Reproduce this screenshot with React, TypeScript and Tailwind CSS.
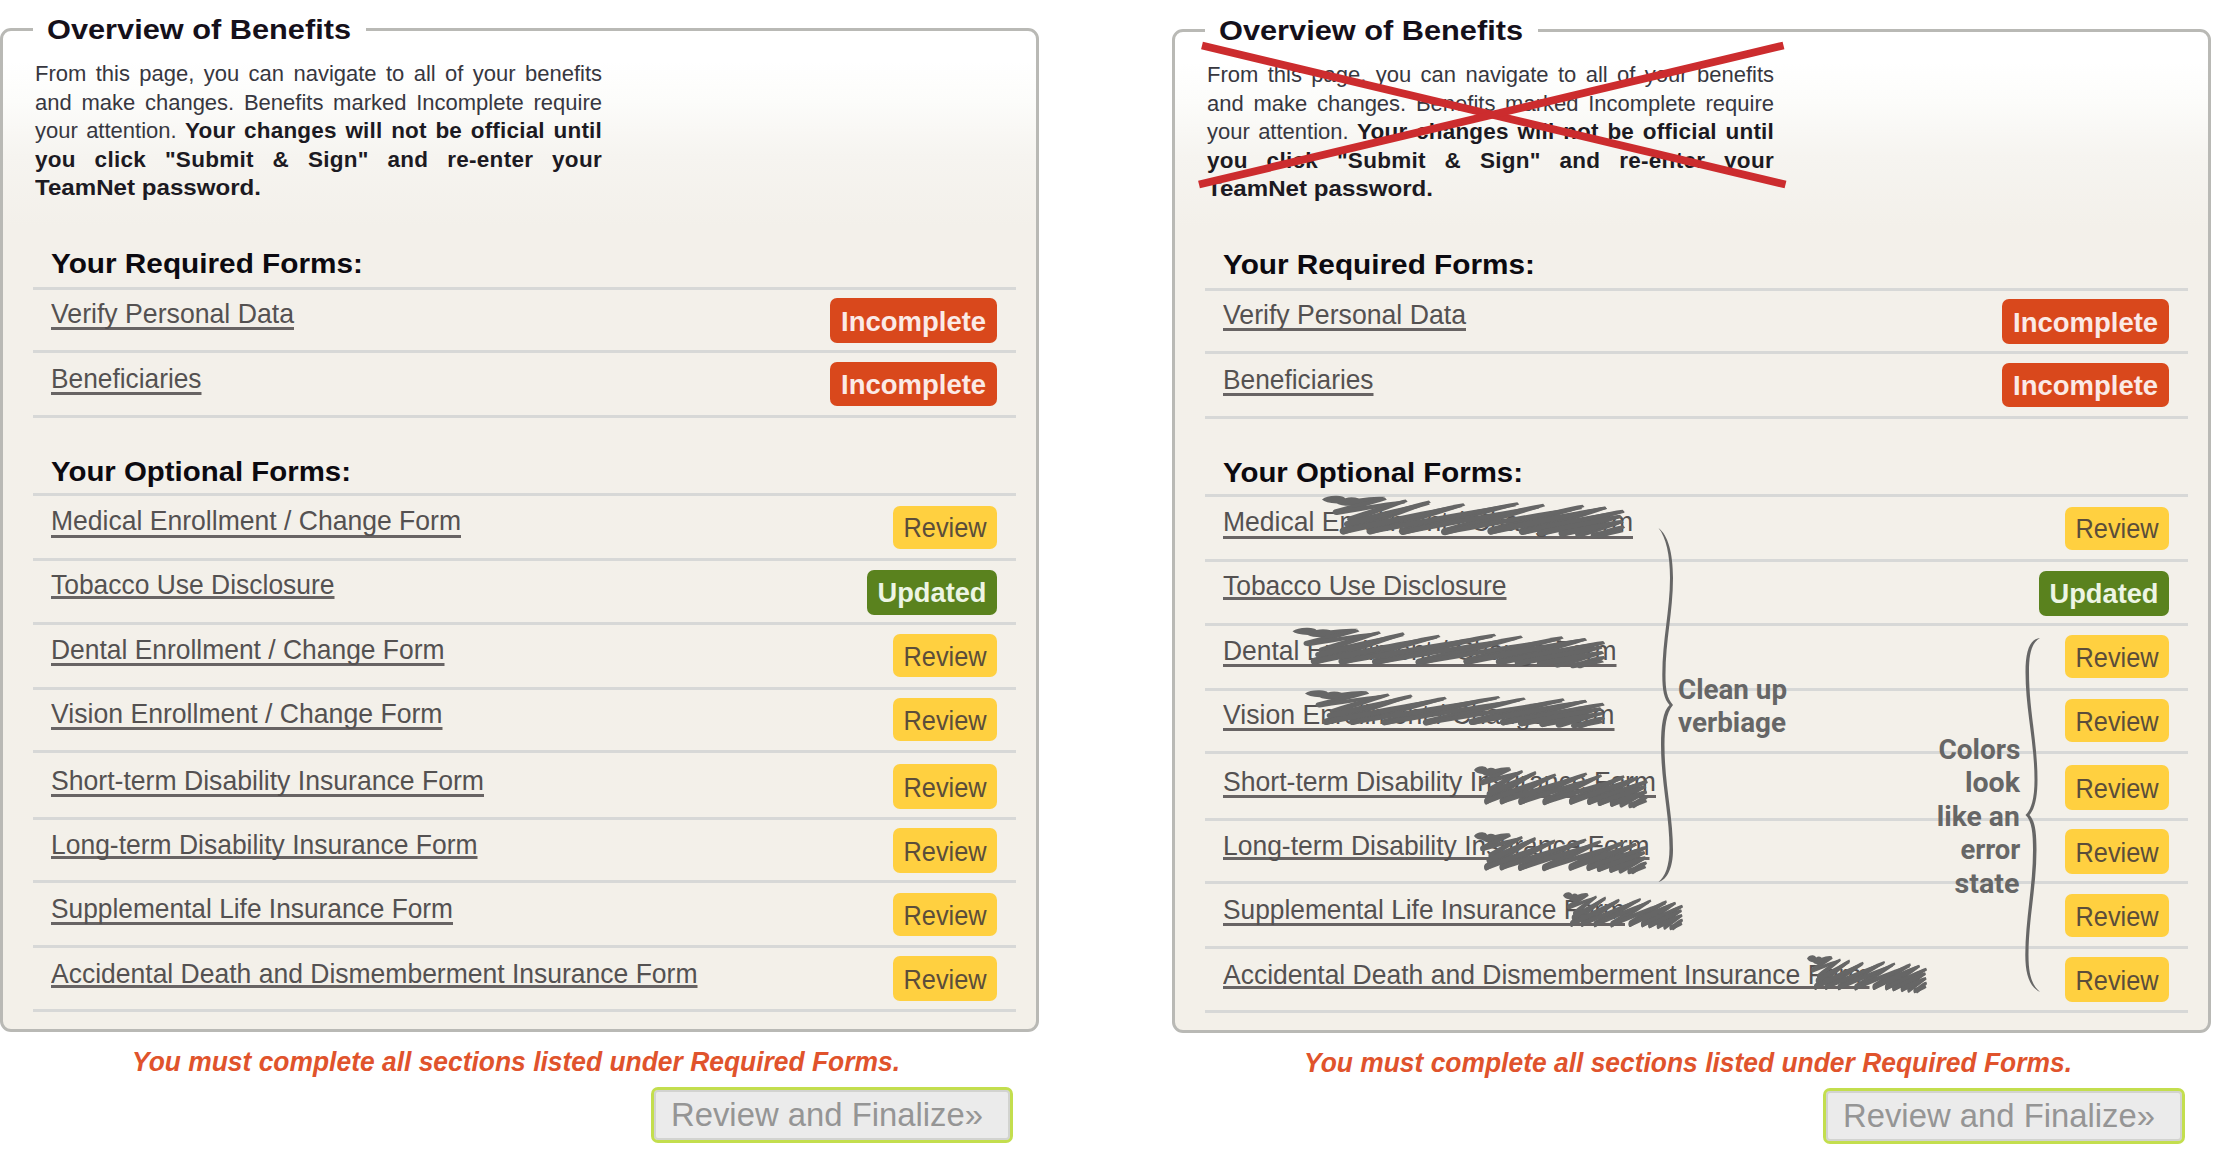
import { useLayoutEffect, useRef, type ReactNode } from "react";

type FitProps = {
  width: number;
  origin?: "left" | "right" | "center";
  className?: string;
  children: ReactNode;
};

/** Single line of text scaled horizontally to an exact measured width. */
function Fit({ width, origin = "left", className = "", children }: FitProps) {
  const ref = useRef<HTMLSpanElement>(null);
  useLayoutEffect(() => {
    const el = ref.current;
    if (!el) return;
    el.style.transform = "none";
    const natural = el.getBoundingClientRect().width;
    el.style.transformOrigin = origin;
    el.style.transform = `scaleX(${width / natural})`;
  }, [width, origin]);
  return (
    <span ref={ref} className={`inline-block whitespace-nowrap ${className}`}>
      {children}
    </span>
  );
}

type Status = "Incomplete" | "Review" | "Updated";

type FormRow = {
  label: string;
  width: number;
  status: Status;
  row: string;
  link: string;
  badge: string;
};

const requiredForms: FormRow[] = [
  { label: "Verify Personal Data", width: 243, status: "Incomplete", row: "h-[63px]", link: "mt-[8px] underline-offset-[4px]", badge: "mt-[8px] h-[45px] leading-[47px]" },
  { label: "Beneficiaries", width: 150.5, status: "Incomplete", row: "h-[65px]", link: "mt-[10px] underline-offset-[4px]", badge: "mt-[9px] h-[44px] leading-[45px]" },
];

const optionalForms: FormRow[] = [
  { label: "Medical Enrollment / Change Form", width: 410, status: "Review", row: "h-[65px]", link: "mt-[9px] underline-offset-[5px]", badge: "mt-[10px] h-[43px] leading-[44px]" },
  { label: "Tobacco Use Disclosure", width: 283.5, status: "Updated", row: "h-[64px]", link: "mt-[8px] underline-offset-[2px]", badge: "mt-[9px] h-[45px] leading-[46px]" },
  { label: "Dental Enrollment / Change Form", width: 393.5, status: "Review", row: "h-[65px]", link: "mt-[9px] underline-offset-[4px]", badge: "mt-[9px] h-[43px] leading-[45px]" },
  { label: "Vision Enrollment / Change Form", width: 391.5, status: "Review", row: "h-[63px]", link: "mt-[8px] underline-offset-[4px]", badge: "mt-[8px] h-[43px] leading-[46px]" },
  { label: "Short-term Disability Insurance Form", width: 433, status: "Review", row: "h-[67px]", link: "mt-[12px] underline-offset-[4px]", badge: "mt-[11px] h-[45px] leading-[47px]" },
  { label: "Long-term Disability Insurance Form", width: 426.5, status: "Review", row: "h-[63px]", link: "mt-[9px] underline-offset-[2px]", badge: "mt-[8px] h-[45px] leading-[47px]" },
  { label: "Supplemental Life Insurance Form", width: 402, status: "Review", row: "h-[65px]", link: "mt-[10px] underline-offset-[4px]", badge: "mt-[10px] h-[43px] leading-[46px]" },
  { label: "Accidental Death and Dismemberment Insurance Form", width: 646.5, status: "Review", row: "h-[64px]", link: "mt-[10px] underline-offset-[2px]", badge: "mt-[8px] h-[45px] leading-[48px]" },
];

const badgeStyle: Record<Status, string> = {
  Incomplete: "w-[167px] bg-[#d9481c] font-bold text-[#fbeae6]",
  Updated: "w-[130px] bg-[#5a821e] font-bold text-[#edf5e4]",
  Review: "w-[104px] bg-[#ffd040] text-[#5b4d3a]",
};

const badgeText: Record<Status, number> = { Incomplete: 145, Updated: 109, Review: 83 };

function FormList({ forms }: { forms: FormRow[] }) {
  return (
    <ul className="border-t-[3px] border-[#d7d8d7]">
      {forms.map((f) => (
        <li key={f.label} className={`flex items-start justify-between border-b-[3px] border-[#d7d8d7] pl-[18px] pr-[19px] ${f.row}`}>
          <a className="block h-[32px]">
            <Fit
              width={f.width}
              className={`text-[27.5px] leading-[32px] text-[#545151] underline decoration-[#686464] decoration-[2.5px] [text-decoration-skip-ink:none] ${f.link}`}
            >
              {f.label}
            </Fit>
          </a>
          <span className={`flex justify-center rounded-[7px] text-[27.5px] ${badgeStyle[f.status]} ${f.badge}`}>
            <Fit origin="center" width={badgeText[f.status]}>{f.status}</Fit>
          </span>
        </li>
      ))}
    </ul>
  );
}

function BenefitsPanel() {
  return (
    <section className="w-[1039px]">
      <fieldset className="h-[1023px] rounded-[11px] border-[3px] border-[#b9b9b5] bg-[linear-gradient(#ffffff_0px,#ffffff_30px,#fcfcfa_70px,#f6f4f0_125px,#f3f0ea_195px,#f3f0e9_100%)] pl-[30px] pr-[20px]">
        <legend className="h-[40px] w-[333px] pl-[14px] text-[28px] font-bold leading-[41px] text-[#15101a]">
          <Fit width={304}>Overview of Benefits</Fit>
        </legend>
        <div className="ml-[2px] mt-[11px] w-[567px] text-[22px] leading-[28.6px] text-[#37373f] [text-align-last:justify]">
          <div>From this page, you can navigate to all of your benefits</div>
          <div>and make changes. Benefits marked Incomplete require</div>
          <div className="whitespace-nowrap">
            your attention. <b className="text-[22.5px] leading-none tracking-[0.2px] text-[#1c1a22]">Your changes will not be official until</b>
          </div>
          <div className="text-[22.5px] font-bold tracking-[0.3px] text-[#1c1a22]">you click "Submit &amp; Sign" and re-enter your</div>
          <div className="text-[22.5px] font-bold text-[#1c1a22] [text-align-last:left]">
            <Fit width={226}>TeamNet password.</Fit>
          </div>
        </div>
        <h2 className="mt-[41px] h-[43px] pl-[18px] text-[28px] font-bold leading-[40px] text-[#0c0a10]">
          <Fit width={312}>Your Required Forms:</Fit>
        </h2>
        <FormList forms={requiredForms} />
        <h2 className="mt-[34px] h-[41px] pl-[18px] text-[28px] font-bold leading-[40px] text-[#0c0a10]">
          <Fit width={300}>Your Optional Forms:</Fit>
        </h2>
        <FormList forms={optionalForms} />
      </fieldset>
      <p className="mt-[13px] pl-[132px] text-[27px] font-bold italic leading-[34px] text-[#e0532c]">
        <Fit width={768}>You must complete all sections listed under Required Forms.</Fit>
      </p>
      <div className="mt-[8px] flex justify-end pr-[26px]">
        <button className="h-[56px] w-[362px] rounded-[7px] border-[3px] border-[#c3de4e] bg-[#ebebeb] shadow-[inset_0_0_0_2px_#d2d3d0]">
          <span className="flex h-full justify-start pl-[17px] text-[33.5px] leading-[49px] text-[#959595]">
            <Fit width={312}>Review and Finalize»</Fit>
          </span>
        </button>
      </div>
    </section>
  );
}

type Stroke = [number, number, number, number, number];

/** Pen strokes of the scribble: tip (upper right), foot (lower left), half width. */
const scribbleStrokes: Stroke[] = [
  [190, 8, 40, 50, 8],
  [253, 14, 85, 72, 9],
  [323, 17, 64, 107, 11],
  [427, 25, 145, 107, 11],
  [590, 22, 243, 108, 11],
  [668, 27, 370, 109, 11],
  [787, 30, 510, 107, 11],
  [855, 35, 605, 108, 11],
  [908, 45, 660, 111, 11],
  [900, 60, 725, 114, 11],
  [905, 76, 775, 116, 11],
  [910, 92, 840, 119, 10],
];

/** Return strokes that lead from one foot up to the next tip. */
const returnStrokes: Stroke[] = [
  [245, 18, 45, 52, 7],
  [320, 22, 75, 86, 9],
  [418, 30, 64, 108, 9],
  [580, 27, 145, 108, 8],
  [650, 34, 243, 110, 8],
  [780, 36, 370, 110, 8],
  [855, 36, 510, 109, 9],
  [908, 47, 605, 110, 9],
  [900, 62, 660, 113, 9],
  [905, 78, 725, 115, 9],
  [905, 105, 820, 120, 9],
];

function strokePath([tx, ty, fx, fy, w]: Stroke) {
  const dx = tx - fx;
  const dy = ty - fy;
  const len = Math.hypot(dx, dy);
  const ux = dx / len;
  const uy = dy / len;
  const px = -uy * w;
  const py = ux * w;
  const mx = fx + dx * 0.75;
  const my = fy + dy * 0.75;
  const bx = fx - ux * w * 1.3;
  const by = fy - uy * w * 1.3;
  return `M${tx} ${ty - 2} Q${mx - px} ${my - py} ${fx - px} ${fy - py} C${bx - px * 0.9} ${by - py * 0.9} ${bx + px * 0.9} ${by + py * 0.9} ${fx + px} ${fy + py} Q${mx + px} ${my + py} ${tx + ux * 6} ${ty + 5}Z`;
}

function Scribble({ x, y, w, h }: { x: number; y: number; w: number; h: number }) {
  return (
    <svg x={x} y={y} width={w} height={h} viewBox="0 0 915 131" preserveAspectRatio="none" fill="#666" overflow="visible">
      <path d="M0 12Q15 0 45 1Q65 2 70 8Q90 2 112 9Q150 2 190 4Q170 22 110 30Q60 34 45 24Q10 22 0 12Z" />
      {[...scribbleStrokes, ...returnStrokes].map((s, i) => (
        <path key={i} d={strokePath(s)} />
      ))}
    </svg>
  );
}

const scribbles = [
  { x: 1322, y: 495.5, w: 303, h: 43.5 },
  { x: 1292.5, y: 627.5, w: 313, h: 41.5 },
  { x: 1305, y: 690, w: 300, h: 39 },
  { x: 1474, y: 766, w: 174, h: 43 },
  { x: 1474, y: 832, w: 173, h: 43 },
  { x: 1563, y: 892, w: 120, h: 39 },
  { x: 1807, y: 955, w: 120, h: 39 },
];

function Annotations() {
  return (
    <>
      <svg className="pointer-events-none absolute inset-0" width="2228" height="1152" viewBox="0 0 2228 1152">
        <g stroke="#cc2c2e" strokeWidth="7.8">
          <path d="M1202 45.500L1785.500 184.5" />
          <path d="M1199 184.5L1783.500 45.500" />
        </g>
        {scribbles.map((s, i) => (
          <Scribble key={i} {...s} />
        ))}
        <g fill="#666">
          <path d="M1658.5 528C1668 535 1673 553 1673 578C1673 612 1665.500 640 1665.500 675C1665.500 690 1667 698 1673 705C1666 713 1664.500 728 1664.500 745C1664.500 785 1673 815 1673 850C1673 868 1667 880 1658.500 882C1665 877 1669.500 866 1669.500 848C1669.500 815 1661 782 1661 745C1661 726 1663 711 1669.500 705C1664 699 1662.300 690 1662.300 675C1662.300 640 1670 610 1670 578C1670 555 1666 537 1658.500 528Z" />
          <path d="M2040 638C2030 639 2025.500 650 2025.500 672C2025.500 710 2034.500 742 2034.500 780C2034.500 796 2032 809 2025.500 815C2032 821 2033 834 2033 850C2033 886 2025.300 920 2025.300 955C2025.300 975 2030 987 2040 992C2032 985 2028.500 975 2028.500 955C2028.500 920 2036.500 886 2036.500 850C2036.500 832 2035 821 2029.500 815C2035 809 2037.500 796 2037.500 780C2037.500 742 2029 710 2029 672C2029 652 2032 643 2040 638Z" />
        </g>
      </svg>
      <div className="absolute left-[1678px] top-[673px] flex flex-col items-start font-[Roboto,sans-serif] text-[28.5px] font-bold leading-[33px] text-[#666]">
        <Fit width={109}>Clean up</Fit>
        <Fit width={108}>verbiage</Fit>
      </div>
      <div className="absolute right-[208px] top-[732.5px] flex flex-col items-end font-[Roboto,sans-serif] text-[28.5px] font-bold leading-[33.5px] text-[#666]">
        <Fit origin="right" width={82}>Colors</Fit>
        <Fit origin="right" width={55}>look</Fit>
        <Fit origin="right" width={83}>like an</Fit>
        <Fit origin="right" width={60}>error</Fit>
        <Fit origin="right" width={65}>state</Fit>
      </div>
    </>
  );
}

export default function App() {
  return (
    <main className="relative flex h-[1152px] w-[2228px] gap-[133px] overflow-hidden bg-white pt-[9px] font-['Liberation_Sans',Arial,sans-serif]">
      <BenefitsPanel />
      <div className="pt-px">
        <BenefitsPanel />
      </div>
      <Annotations />
    </main>
  );
}
